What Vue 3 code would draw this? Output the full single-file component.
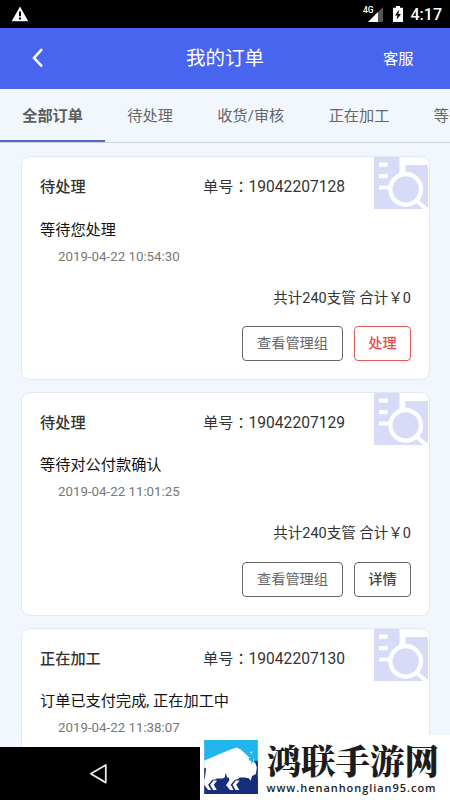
<script setup>
const tabs = ['全部订单', '待处理', '收货/审核', '正在加工', '等待发货']
const orders = [
  { status: '待处理', no: '19042207128', note: '等待您处理', time: '2019-04-22 10:54:30', action: '处理', urgent: true },
  { status: '待处理', no: '19042207129', note: '等待对公付款确认', time: '2019-04-22 11:01:25', action: '详情', urgent: false },
  { status: '正在加工', no: '19042207130', note: '订单已支付完成, 正在加工中', time: '2019-04-22 11:38:07', action: '详情', urgent: false },
]
</script>

<template>
  <div class="screen">
    <div class="status">
      <svg class="warn" viewBox="0 0 18 16" width="18" height="16">
        <path d="M9 0.6 17.3 15.2H0.7Z" fill="#fff" />
        <path d="M8 5.6h2v4.6H8zM8 11.4h2v2H8z" fill="#000" />
      </svg>
      <div class="status-right">
        <span class="net">4G</span>
        <svg class="signal" viewBox="0 0 15 15" width="15" height="15">
          <path d="M15 0V15H0Z" fill="#555" />
          <path d="M10 5V15H0Z" fill="#fff" />
        </svg>
        <svg class="battery" viewBox="0 0 10 16" width="10" height="16">
          <path d="M3 0h4v1.8h3V16H0V1.8h3Z" fill="#fff" />
          <path d="M6 3.8 2 9.6h2.4L3.8 13.6 8 7.9H5.4Z" fill="#000" />
        </svg>
        <span class="clock">4:17</span>
      </div>
    </div>

    <header class="header">
      <svg class="back" viewBox="0 0 12 20" width="12" height="20">
        <path d="M10 1.2 2 9.9 10 18.3" fill="none" stroke="#fff" stroke-width="2.5" />
      </svg>
      <h1 class="title">我的订单</h1>
      <span class="service">客服</span>
    </header>

    <nav class="tabs">
      <span v-for="(tab, i) in tabs" :key="tab" class="tab" :class="{ active: i === 0 }">{{ tab }}</span>
    </nav>

    <main class="list">
      <section v-for="order in orders" :key="order.no" class="card">
        <svg class="corner" viewBox="0 0 54 52" width="54" height="52">
          <path d="M0 0H54V52H0Z" fill="#d7dbf8" />
          <path d="M25.5 0H54V8H31.5V18H25.5Z" fill="#fff" />
          <path d="M5 5.5h8.8v4.2H5zM5 17h8.8v4.2H5zM5 28.4h11v4H5z" fill="#fff" />
          <circle cx="31.7" cy="32.3" r="15.3" fill="#d7dbf8" stroke="#fff" stroke-width="4.3" />
          <path d="M42.5 43.5 53.5 53" stroke="#fff" stroke-width="4.2" />
        </svg>
        <div class="row head">
          <b class="state">{{ order.status }}</b>
          <span class="number">单号<span class="colon">：</span><span class="digits">{{ order.no }}</span></span>
        </div>
        <div class="row note">{{ order.note }}</div>
        <div class="row time">{{ order.time }}</div>
        <div class="row total">共计240支管 合计￥0</div>
        <div class="actions">
          <button class="btn">查看管理组</button>
          <button class="btn main" :class="{ urgent: order.urgent }">{{ order.action }}</button>
        </div>
      </section>
    </main>

    <div class="navbar">
      <svg viewBox="0 0 19 22" width="19" height="22">
        <path d="M16.8 2V19.6L1.8 10.8Z" fill="none" stroke="#e8e8e8" stroke-width="1.8" stroke-linejoin="round" />
      </svg>
    </div>

    <aside class="brand">
      <svg class="bison" viewBox="12 15 162 163" width="54" height="54">
        <path d="M12 15H174V110H12Z" fill="#22b4ec" />
        <path d="M12 128H174V178H12Z" fill="#182e7c" />
        <path d="M174 78V178H140V80Z" fill="#182e7c" />
        <path d="M12 78 34 68 66 54 92 44 110 38 122 44 138 58 146 66 152 66 150 52 157 49 156 64 163 72 162 80 167 86 171 98 168 118 157 124 152 138 146 130 138 130 135 121 122 124 116 132 104 136 92 150 101 166 90 166 78 151 88 137 86 123 80 131 50 131 45 134 36 136 24 150 33 166 24 166 12 150Z" fill="#fff" />
        <path d="M12 98 18 102 14 130 12 134ZM77 114 81 127 82 134H64L74 128Z" fill="#182e7c" />
        <path d="M51 137 41 150 50 166H39L30 150 40 137ZM119 137 109 150 118 166H107L98 150 108 137Z" fill="#fff" />
        <path d="M153 51 158 61 161 68 161 80 154 89 155 80 148 76 146 70 151 66 150 57Z" fill="#22b4ec" />
      </svg>
      <div class="brand-text">
        <div class="brand-name">鸿联手游网</div>
        <div class="brand-url">www.henanhonglian95.com</div>
      </div>
    </aside>
  </div>
</template>

<style>
body {
  margin: 0;
  overflow: hidden;
}
</style>

<style scoped>
.screen {
  position: relative;
  display: flex;
  flex-direction: column;
  width: 450px;
  height: 800px;
  overflow: hidden;
  background: #f2f7fe;
  font-family: Roboto, "Noto Sans CJK SC", sans-serif;
  color: #333;
}
.status {
  flex: none;
  display: flex;
  align-items: center;
  justify-content: space-between;
  height: 28px;
  box-sizing: border-box;
  padding: 0 9px 0 11px;
  background: #000;
  color: #fff;
}
.warn {
  margin-top: -1px;
}
.status-right {
  display: flex;
  align-items: center;
}
.net {
  align-self: flex-start;
  font-size: 8.5px;
  line-height: 12px;
  font-weight: 500;
  margin-right: -6px;
}
.battery {
  margin-left: 10px;
}
.clock {
  margin-left: 8px;
  font-size: 16px;
  line-height: 20px;
  font-weight: 500;
  margin-top: 1px;
}
.status-right {
  margin-right: -1px;
}
.header {
  flex: none;
  display: grid;
  grid-template-columns: 100px 1fr 100px;
  align-items: center;
  height: 61px;
  background: #4865f0;
  color: #fff;
}
.back {
  margin-left: 32px;
  margin-top: -1px;
}
.title {
  margin: 0;
  text-align: center;
  font-size: 19.5px;
  font-weight: 400;
  line-height: 28px;
}
.service {
  margin-left: 33px;
  font-size: 15.3px;
  line-height: 24px;
}
.tabs {
  flex: none;
  display: flex;
  height: 54px;
  box-sizing: border-box;
  border-bottom: 1px solid #cfd2d8;
  overflow: hidden;
}
.tab {
  flex: none;
  padding: 0 22.2px;
  font-size: 15.2px;
  line-height: 55px;
  height: 54px;
  box-sizing: border-box;
  color: #666;
  white-space: nowrap;
}
.tab.active {
  font-weight: 600;
  border-bottom: 3px solid #5468cc;
  color: #5d5d5d;
}
.list {
  flex: 1;
  min-height: 0;
  overflow: hidden;
  display: flex;
  flex-direction: column;
  gap: 13.8px;
  padding: 14px 21px 0 22px;
}
.card {
  position: relative;
  flex: none;
  height: 222px;
  box-sizing: border-box;
  padding: 0 18px;
  background: #fff;
  border-radius: 8px;
  overflow: hidden;
  box-shadow: 0 0 0 1px #e2e8f3;
}
.corner {
  position: absolute;
  top: 0;
  right: 1px;
}
.row {
  display: flex;
  align-items: center;
  white-space: pre;
}
.head {
  height: 56px;
}
.state {
  width: 163px;
  font-size: 15.2px;
  font-weight: 500;
}
.number {
  font-size: 15.2px;
}
.colon {
  font-family: "Noto Sans CJK TC", sans-serif;
}
.digits {
  font-size: 15.6px;
}
.note {
  height: 29px;
  font-size: 15.2px;
  color: #111;
}
.time {
  height: 28px;
  padding-left: 18px;
  font-size: 13.3px;
  color: #777;
}
.total {
  height: 52px;
  justify-content: flex-end;
  font-size: 14.5px;
}
.actions {
  display: flex;
  justify-content: flex-end;
  gap: 11px;
  margin-top: 4px;
}
.btn {
  width: 101px;
  height: 35px;
  padding: 0;
  border: 1px solid #666;
  border-radius: 4px;
  background: #fff;
  color: #666;
  font: 400 14.2px/33px Roboto, "Noto Sans CJK SC", sans-serif;
}
.btn.main {
  width: 57px;
  color: #444;
  font-weight: 500;
}
.btn.urgent {
  color: #e64f4f;
  border-color: #e25a5a;
}
.navbar {
  flex: none;
  display: flex;
  align-items: center;
  height: 53px;
  padding-left: 89px;
  background: #000;
}
.brand {
  position: absolute;
  right: 0;
  bottom: 0;
  display: flex;
  width: 250px;
  height: 65px;
  box-sizing: border-box;
  padding: 5px 0 0 4px;
  background: #fff;
}
.bison {
  flex: none;
}
.brand-text {
  margin-left: 8.5px;
  color: #1c1c1c;
  white-space: nowrap;
}
.brand-name {
  font-family: "Noto Serif CJK SC", "Noto Sans CJK SC", serif;
  font-size: 34.5px;
  font-weight: 900;
  line-height: 39px;
}
.brand-url {
  font-family: "Open Sans", sans-serif;
  font-size: 11px;
  font-weight: 600;
  letter-spacing: 0.95px;
  line-height: 17px;
}
</style>
